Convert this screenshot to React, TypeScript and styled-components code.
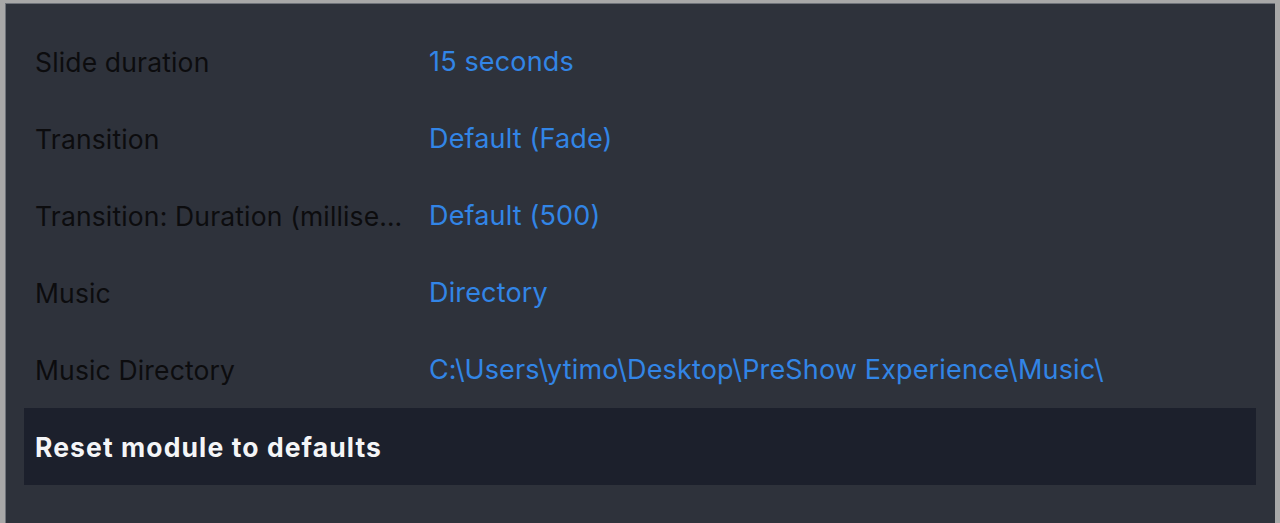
import React from "react";
import styled, { createGlobalStyle } from "styled-components";

const Global = createGlobalStyle`
  html, body { margin: 0; padding: 0; background: #a8a8a8; }
  body { font-family: Inter, "Noto Sans", sans-serif; }
  #root { height: 523px; }
`;

const Frame = styled.div`
  box-sizing: border-box;
  width: 1280px;
  height: 523px;
  background: #a8a8a8;
  padding: 3px 5px 0 5px;
  display: flex;
`;

const Panel = styled.div`
  flex: 1;
  background: #2e323b;
  box-shadow: inset 1px 1px 0 #6f737a;
  padding: 20px 19px 0 19px;
  display: flex;
  flex-direction: column;
`;

const Row = styled.div<{ $action?: boolean }>`
  height: 77px;
  display: grid;
  grid-template-columns: 372px 1fr;
  column-gap: 22px;
  align-items: center;
  padding: 0 11px;
  background: ${(p) => (p.$action ? "#1c202c" : "transparent")};
`;

const Label = styled.div`
  font-size: 26.5px;
  color: #0c0c0e;
  white-space: nowrap;
  overflow: hidden;
  text-overflow: ellipsis;
  letter-spacing: 0.15px;
`;

const Value = styled.div`
  font-size: 27px;
  color: #3285e6;
  white-space: nowrap;
  letter-spacing: 0.15px;
`;

const Action = styled.div`
  grid-column: 1 / -1;
  font-size: 26.5px;
  font-weight: 700;
  color: #f4f5f7;
  letter-spacing: 1.1px;
`;

const settings: [string, string][] = [
  ["Slide duration", "15 seconds"],
  ["Transition", "Default (Fade)"],
  ["Transition: Duration (milliseconds)", "Default (500)"],
  ["Music", "Directory"],
  ["Music Directory", "C:\\Users\\ytimo\\Desktop\\PreShow Experience\\Music\\"],
];

export default function App() {
  return (
    <>
      <Global />
      <Frame>
        <Panel>
          {settings.map(([l, v]) => (
            <Row key={l}>
              <Label title={l}>{l}</Label>
              <Value>{v}</Value>
            </Row>
          ))}
          <Row $action>
            <Action>Reset module to defaults</Action>
          </Row>
        </Panel>
      </Frame>
    </>
  );
}
